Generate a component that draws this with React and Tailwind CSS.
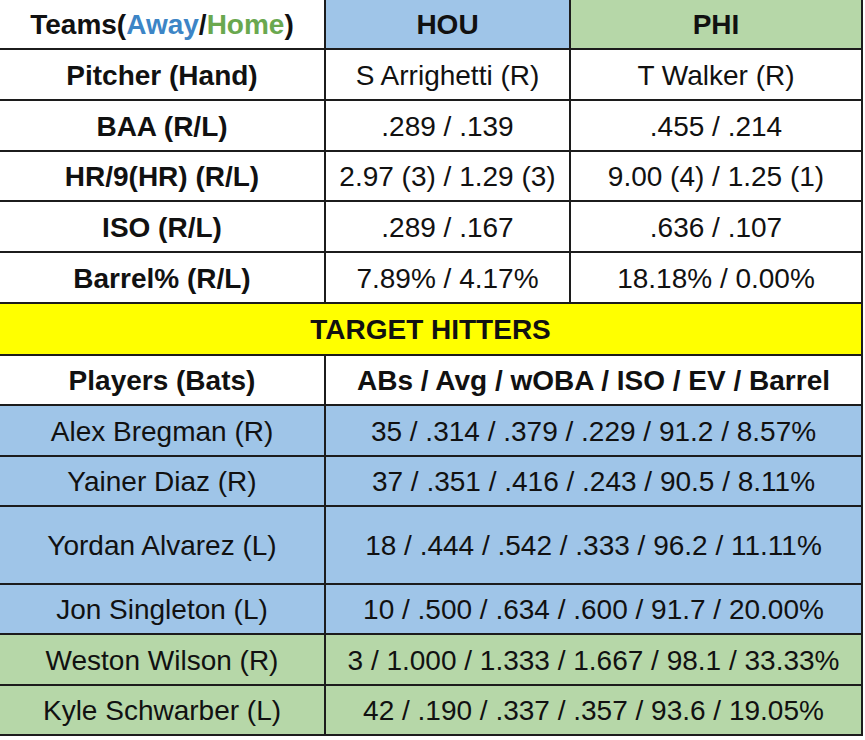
import React from "react";

const pitchRows = [
  ["Pitcher (Hand)", "S Arrighetti (R)", "T Walker (R)", "h-[51px]"],
  ["BAA (R/L)", ".289 / .139", ".455 / .214", "h-[51px]"],
  ["HR/9(HR) (R/L)", "2.97 (3) / 1.29 (3)", "9.00 (4) / 1.25 (1)", "h-[50px]"],
  ["ISO (R/L)", ".289 / .167", ".636 / .107", "h-[51px]"],
  ["Barrel% (R/L)", "7.89% / 4.17%", "18.18% / 0.00%", "h-[51px]"],
];

const hitters = [
  ["Alex Bregman (R)", "35 / .314 / .379 / .229 / 91.2 / 8.57%", "bg-[#9fc5e8]", "h-[51px]"],
  ["Yainer Diaz (R)", "37 / .351 / .416 / .243 / 90.5 / 8.11%", "bg-[#9fc5e8]", "h-[50px]"],
  ["Yordan Alvarez (L)", "18 / .444 / .542 / .333 / 96.2 / 11.11%", "bg-[#9fc5e8]", "h-[78px]"],
  ["Jon Singleton (L)", "10 / .500 / .634 / .600 / 91.7 / 20.00%", "bg-[#9fc5e8]", "h-[50px]"],
  ["Weston Wilson (R)", "3 / 1.000 / 1.333 / 1.667 / 98.1 / 33.33%", "bg-[#b6d7a8]", "h-[51px]"],
  ["Kyle Schwarber (L)", "42 / .190 / .337 / .357 / 93.6 / 19.05%", "bg-[#b6d7a8]", "h-[50px]"],
];

const cell = "flex items-center justify-center pt-[2px] border-r-2 border-b-2 border-[#1c1c1c] whitespace-nowrap";

export default function App() {
  return (
    <div
      className="w-[865px] h-[740px] bg-white text-[28px] text-[#111] leading-none"
      style={{ fontFamily: '"Liberation Sans", Arial, sans-serif' }}
    >
      <div className="w-[863px] flex flex-col">
        <div className="grid grid-cols-[326px_245px_292px] h-[50px] font-bold">
          <div className={cell}>
            <span>
              Teams(<span className="text-[#3d85c6]">Away</span>/<span className="text-[#6aa84f]">Home</span>)
            </span>
          </div>
          <div className={`${cell} bg-[#9fc5e8]`}>HOU</div>
          <div className={`${cell} bg-[#b6d7a8]`}>PHI</div>
        </div>
        {pitchRows.map(([a, b, c, h]) => (
          <div key={a} className={`grid grid-cols-[326px_245px_292px] ${h}`}>
            <div className={`${cell} font-bold`}>{a}</div>
            <div className={cell}>{b}</div>
            <div className={cell}>{c}</div>
          </div>
        ))}
        <div className={`${cell} h-[52px] bg-[#ffff00] font-bold`}>TARGET HITTERS</div>
        <div className="grid grid-cols-[326px_537px] h-[50px] font-bold">
          <div className={cell}>Players (Bats)</div>
          <div className={cell}>ABs / Avg / wOBA / ISO / EV / Barrel</div>
        </div>
        {hitters.map(([a, b, bg, h]) => (
          <div key={a} className={`grid grid-cols-[326px_537px] ${h} ${bg}`}>
            <div className={cell}>{a}</div>
            <div className={cell}>{b}</div>
          </div>
        ))}
      </div>
    </div>
  );
}
